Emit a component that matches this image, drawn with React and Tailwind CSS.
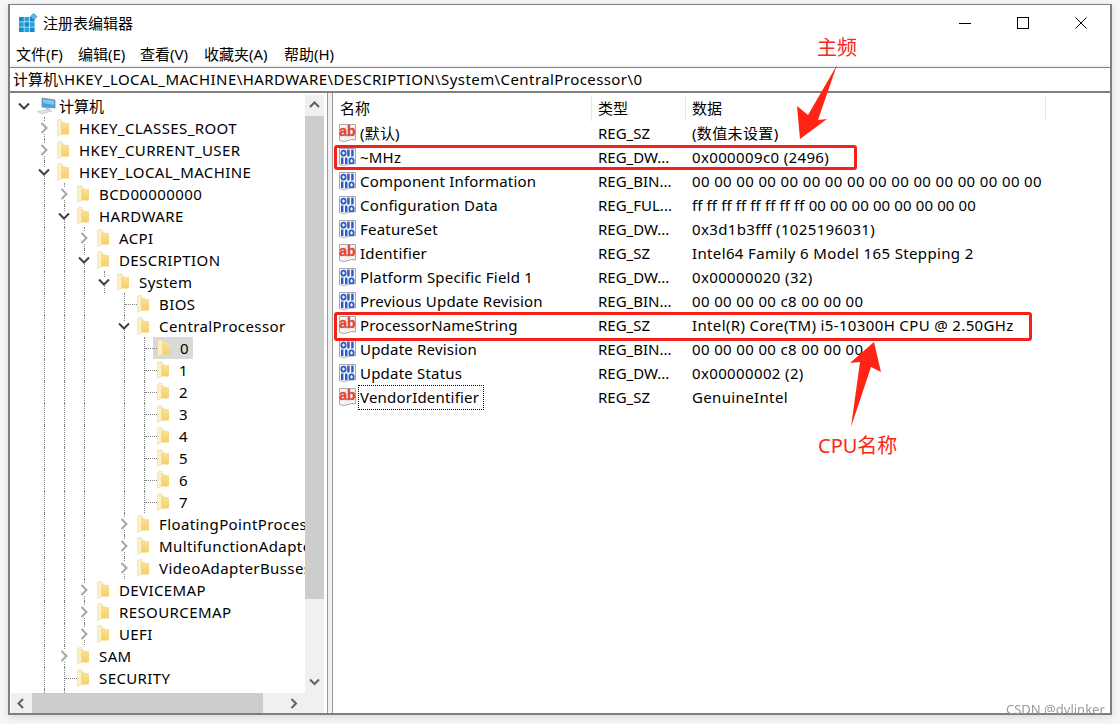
import React from 'react';

const treeRows = [
  { label: '计算机', depth: 0, state: 'open', computer: true },
  { label: 'HKEY_CLASSES_ROOT', depth: 1, state: 'closed' },
  { label: 'HKEY_CURRENT_USER', depth: 1, state: 'closed' },
  { label: 'HKEY_LOCAL_MACHINE', depth: 1, state: 'open' },
  { label: 'BCD00000000', depth: 2, state: 'closed' },
  { label: 'HARDWARE', depth: 2, state: 'open' },
  { label: 'ACPI', depth: 3, state: 'closed' },
  { label: 'DESCRIPTION', depth: 3, state: 'open' },
  { label: 'System', depth: 4, state: 'open' },
  { label: 'BIOS', depth: 5, state: 'leaf' },
  { label: 'CentralProcessor', depth: 5, state: 'open' },
  { label: '0', depth: 6, state: 'leaf', selected: true },
  { label: '1', depth: 6, state: 'leaf' },
  { label: '2', depth: 6, state: 'leaf' },
  { label: '3', depth: 6, state: 'leaf' },
  { label: '4', depth: 6, state: 'leaf' },
  { label: '5', depth: 6, state: 'leaf' },
  { label: '6', depth: 6, state: 'leaf' },
  { label: '7', depth: 6, state: 'leaf' },
  { label: 'FloatingPointProcessor', depth: 5, state: 'closed' },
  { label: 'MultifunctionAdapter', depth: 5, state: 'closed' },
  { label: 'VideoAdapterBusses', depth: 5, state: 'closed' },
  { label: 'DEVICEMAP', depth: 3, state: 'closed' },
  { label: 'RESOURCEMAP', depth: 3, state: 'closed' },
  { label: 'UEFI', depth: 3, state: 'closed' },
  { label: 'SAM', depth: 2, state: 'closed' },
  { label: 'SECURITY', depth: 2, state: 'leaf' },
];

const values = [
  { name: '(默认)', kind: 'sz', type: 'REG_SZ', data: '(数值未设置)' },
  { name: '~MHz', kind: 'bin', type: 'REG_DW...', data: '0x000009c0 (2496)' },
  { name: 'Component Information', kind: 'bin', type: 'REG_BIN...', data: '00 00 00 00 00 00 00 00 00 00 00 00 00 00 00 00' },
  { name: 'Configuration Data', kind: 'bin', type: 'REG_FUL...', data: 'ff ff ff ff ff ff ff ff 00 00 00 00 00 00 00 00', tight: true },
  { name: 'FeatureSet', kind: 'bin', type: 'REG_DW...', data: '0x3d1b3fff (1025196031)' },
  { name: 'Identifier', kind: 'sz', type: 'REG_SZ', data: 'Intel64 Family 6 Model 165 Stepping 2' },
  { name: 'Platform Specific Field 1', kind: 'bin', type: 'REG_DW...', data: '0x00000020 (32)' },
  { name: 'Previous Update Revision', kind: 'bin', type: 'REG_BIN...', data: '00 00 00 00 c8 00 00 00' },
  { name: 'ProcessorNameString', kind: 'sz', type: 'REG_SZ', data: 'Intel(R) Core(TM) i5-10300H CPU @ 2.50GHz' },
  { name: 'Update Revision', kind: 'bin', type: 'REG_BIN...', data: '00 00 00 00 c8 00 00 00' },
  { name: 'Update Status', kind: 'bin', type: 'REG_DW...', data: '0x00000002 (2)' },
  { name: 'VendorIdentifier', kind: 'sz', type: 'REG_SZ', data: 'GenuineIntel', focused: true },
];

const menus = [
  { label: '文件(F)', width: 'w-[62px]' },
  { label: '编辑(E)', width: 'w-[62px]' },
  { label: '查看(V)', width: 'w-[64px]' },
  { label: '收藏夹(A)', width: 'w-[80px]' },
  { label: '帮助(H)', width: 'w-[60px]' },
];

function RegeditIcon() {
  const cells = [];
  for (let r = 0; r < 3; r++) {
    for (let c = 0; c < 3; c++) {
      cells.push(<rect key={`${r}${c}`} x={1 + c * 5.4} y={4 + r * 5.2} width="4.8" height="4.6" fill={(r + c) % 2 ? '#2aa0dc' : '#1689c9'} />);
    }
  }
  return (
    <svg width="20" height="20" viewBox="0 0 20 20" className="shrink-0">
      {cells}
      <path d="M15.5 0.5 L19 3.5 L15.5 7 L12.5 3.5 Z" fill="#5db7e4" stroke="#1c7fb8" strokeWidth="0.6" />
    </svg>
  );
}

function Folder() {
  return (
    <svg width="12" height="18" viewBox="0 0 12 18" className="shrink-0">
      <defs>
        <linearGradient id="folderBody" x1="0" y1="0" x2="0" y2="1">
          <stop offset="0" stopColor="#fbe39b" />
          <stop offset="1" stopColor="#f4cf6c" />
        </linearGradient>
      </defs>
      <path d="M4 2.5 L7.5 2.5 L7.5 4 L12 4 V15.5 H4 Z" fill="url(#folderBody)" />
      <path d="M0 1.5 L4.5 0 V15.5 L0 17.5 Z" fill="#fdf1c4" stroke="#eecf7c" strokeWidth="0.5" />
    </svg>
  );
}

function ComputerIcon() {
  return (
    <svg width="20" height="20" viewBox="0 0 20 20" className="shrink-0">
      <path d="M6 2 L19 4 V12 L6 11 Z" fill="#3fa3de" stroke="#7d8b96" strokeWidth="0.8" />
      <path d="M7 3.2 L18 4.8 V9 L7 7 Z" fill="#7cc7ef" />
      <path d="M10 12 L14 12.4 L14 14 L10 14 Z" fill="#b8c0c6" />
      <path d="M1 15.5 L12 13.5 L16 15 L6 18 Z" fill="#dfe3e6" stroke="#b4bac0" strokeWidth="0.5" />
    </svg>
  );
}

function Chevron({ open }) {
  if (open) {
    return (
      <svg width="12" height="8" viewBox="0 0 12 8" className="shrink-0 bg-white">
        <path d="M1 1.5 L6 6.5 L11 1.5" fill="none" stroke="#404040" strokeWidth="2" />
      </svg>
    );
  }
  return (
    <svg width="8" height="12" viewBox="0 0 8 12" className="shrink-0 bg-white">
      <path d="M1.5 1 L6.5 6 L1.5 11" fill="none" stroke="#a6a6a6" strokeWidth="2" />
    </svg>
  );
}

// dotted guide columns to the left of a row
function guideShown(level, depth) {
  if (level === 0) return false;
  if (level === 4) return false;
  if (level === 5) return depth >= 6;
  return depth > level;
}

function TreeRow({ row }) {
  const cells = [];
  for (let level = 0; level < row.depth; level++) {
    cells.push(
      <div key={level} className="w-5 h-full shrink-0 flex justify-center">
        {guideShown(level, row.depth) && <div className="h-full border-l border-dotted border-[#808080]" />}
      </div>
    );
  }
  return (
    <div className="h-[22px] flex items-center shrink-0 whitespace-nowrap pl-[3px]">
      {cells}
      <div className="relative w-5 h-full shrink-0 flex items-center justify-center">
        {row.depth > 0 && <div className="absolute left-[10px] top-0 h-full border-l border-dotted border-[#808080]" />}
        {row.state === 'leaf' && <div className="absolute left-[11px] right-[-3px] top-[11px] border-t border-dotted border-[#808080]" />}
        {row.state !== 'leaf' && <div className="relative flex"><Chevron open={row.state === 'open'} /></div>}
      </div>
      {row.computer ? (
        <div className="flex items-center h-full">
          <div className="ml-[2px]"><ComputerIcon /></div>
          <span className="ml-[3px]">{row.label}</span>
        </div>
      ) : (
        <div className={`flex items-center h-full pr-1 ${row.selected ? 'bg-[#d9d9d9] -ml-px pl-[5px]' : 'ml-[3px]'}`}>
          <Folder />
          <span className="ml-[10px] tracking-[0.4px]">{row.label}</span>
        </div>
      )}
    </div>
  );
}

function TreeTail() {
  return (
    <div className="h-[22px] flex shrink-0 pl-[3px]">
      <div className="w-5 h-full" />
      <div className="w-5 h-full flex justify-center"><div className="h-full border-l border-dotted border-[#808080]" /></div>
      <div className="w-5 h-full flex justify-center"><div className="h-full border-l border-dotted border-[#808080]" /></div>
    </div>
  );
}

function ValueIcon({ kind }) {
  const page = 'M1.5 1.5 H17.5 V17 Q14 15.5 10 17.5 Q5.5 19.5 1.5 17.5 Z';
  if (kind === 'sz') {
    return (
      <svg width="20" height="20" viewBox="0 0 20 20" className="shrink-0">
        <path d={page} fill="#f7f3f0" stroke="#a8a8a8" />
        <text x="9.5" y="13" textAnchor="middle" fontSize="14" fontWeight="700" fill="#dc4a2c" stroke="#dc4a2c" strokeWidth="0.4" fontFamily="'Liberation Sans', sans-serif">ab</text>
      </svg>
    );
  }
  return (
    <svg width="20" height="20" viewBox="0 0 20 20" className="shrink-0">
      <path d={page} fill="#f7f7f7" stroke="#a8a8a8" />
      <rect x="3.4" y="3.6" width="4.2" height="5" rx="2" fill="none" stroke="#2a58c4" strokeWidth="1.8" />
      <rect x="9.2" y="2.6" width="2.4" height="6.8" fill="#2a58c4" />
      <rect x="13.2" y="2.6" width="2.4" height="6.8" fill="#2a58c4" />
      <rect x="3" y="10.6" width="2.4" height="6.4" fill="#2a58c4" />
      <rect x="7" y="10.6" width="2.4" height="6.4" fill="#2a58c4" />
      <rect x="11.4" y="11.4" width="4.2" height="5" rx="2" fill="none" stroke="#2a58c4" strokeWidth="1.8" />
    </svg>
  );
}

function ValueRow({ item }) {
  return (
    <div className="h-6 flex items-center whitespace-nowrap">
      <div className="w-[259px] shrink-0 flex items-center pl-[5px]">
        <ValueIcon kind={item.kind} />
        <span className={`pl-px border flex items-center h-[25px] tracking-[0.2px] ${item.focused ? 'pr-1 border-dotted border-black' : 'pr-px border-transparent'}`}>{item.name}</span>
      </div>
      <div className="w-[94px] shrink-0 pl-[6px]">{item.type}</div>
      <div className={`pl-[6px] ${item.tight ? 'tracking-[0.12px]' : 'tracking-[0.36px]'}`}>{item.data}</div>
    </div>
  );
}

function Arrow({ dir }) {
  const paths = {
    up: 'M2 8 L6.5 3.5 L11 8',
    down: 'M2 3.5 L6.5 8 L11 3.5',
    left: 'M8 2 L3.5 6.5 L8 11',
    right: 'M4.5 2 L9 6.5 L4.5 11',
  };
  return (
    <svg width="13" height="13" viewBox="0 0 13 13">
      <path d={paths[dir]} fill="none" stroke="#606060" strokeWidth="2" />
    </svg>
  );
}

export default function App() {
  return (
    <div className="relative w-[1120px] h-[724px] overflow-hidden bg-[#f6f6f6] pt-1 pl-2 text-[15px] leading-none text-black font-['Noto_Sans','Noto_Sans_CJK_SC',sans-serif]">
      <div className="w-[1104px] h-[711px] flex flex-col bg-white border-x-2 border-b-2 border-t border-[#7e7e86] shadow-[0_2px_8px_rgba(0,0,0,0.12)]">
        <div className="h-9 shrink-0 flex items-center">
          <div className="pl-2"><RegeditIcon /></div>
          <span className="ml-[5px]">注册表编辑器</span>
          <div className="ml-auto flex h-full">
            <div className="w-[58px] flex items-center justify-center">
              <div className="w-3 border-t border-black" />
            </div>
            <div className="w-[58px] flex items-center justify-center">
              <div className="w-3 h-3 border border-black" />
            </div>
            <div className="w-[58px] flex items-center justify-center">
              <svg width="12" height="12" viewBox="0 0 12 12">
                <path d="M0.5 0.5 L11.5 11.5 M11.5 0.5 L0.5 11.5" stroke="black" strokeWidth="1" fill="none" />
              </svg>
            </div>
          </div>
        </div>

        <div className="h-[26px] shrink-0 flex items-center pt-[2px] pl-[6px] border-b-2 border-[#f4f4f4]">
          {menus.map((m) => (
            <div key={m.label} className={`${m.width} whitespace-nowrap`}>{m.label}</div>
          ))}
        </div>

        <div className="h-[26px] shrink-0 flex items-center pl-[3px] border-t border-b-2 border-[#808080] whitespace-nowrap">
          计算机<span className="tracking-[0.42px]">\HKEY_LOCAL_MACHINE\HARDWARE\DESCRIPTION\System\CentralProcessor\0</span>
        </div>

        <div className="flex-1 flex min-h-0">
          <div className="w-[317px] shrink-0 flex flex-col pl-px pr-[3px]">
            <div className="flex-1 flex min-h-0">
              <div className="flex-1 min-w-0 overflow-hidden pt-[2px] flex flex-col">
                {treeRows.map((row) => (
                  <TreeRow key={row.label} row={row} />
                ))}
                <TreeTail />
              </div>
              <div className="w-[19px] shrink-0 mt-[2px] bg-[#f0f0f0] flex flex-col">
                <div className="h-[21px] flex items-center justify-center"><Arrow dir="up" /></div>
                <div className="h-[483px] bg-[#cdcdcd]" />
                <div className="mt-auto h-[21px] flex items-center justify-center"><Arrow dir="down" /></div>
              </div>
            </div>
            <div className="h-5 shrink-0 bg-[#f0f0f0] flex pr-5">
              <div className="w-[21px] flex items-center justify-center"><Arrow dir="left" /></div>
              <div className="w-[231px] bg-[#cdcdcd]" />
              <div className="ml-auto w-[21px] flex items-center justify-center"><Arrow dir="right" /></div>
            </div>
          </div>

          <div className="w-[6px] shrink-0 bg-[#f0f0f0] border-x border-[#9a9a9a]" />

          <div className="flex-1 min-w-0 flex flex-col overflow-hidden">
            <div className="h-7 shrink-0 flex items-center pt-[2px]">
              <div className="w-[259px] h-full pl-[7px] flex items-center border-r border-[#e5e5e5]">名称</div>
              <div className="w-[94px] h-full pl-[6px] flex items-center border-r border-[#e5e5e5]">类型</div>
              <div className="w-[360px] h-full pl-[6px] flex items-center border-r border-[#e5e5e5]">数据</div>
            </div>
            {values.map((item) => (
              <ValueRow key={item.name} item={item} />
            ))}
          </div>
        </div>
      </div>

      {/* red annotations drawn on top of the screenshot */}
      <div className="absolute left-[334px] top-[145px] w-[523px] h-[25px] border-[3px] border-[#f5201a] rounded-[3px]" />
      <div className="absolute left-[334px] top-[312px] w-[698px] h-[29px] border-[3px] border-[#f5201a] rounded-[3px]" />
      <svg width="1120" height="724" viewBox="0 0 1120 724" className="absolute left-0 top-0 pointer-events-none">
        <polygon points="837,65 818,120 827,119 800,139 797,106 808,115" fill="#ff2415" />
        <polygon points="874,342 881,372 871,367 851,427 860,362 850,363" fill="#ff2415" />
      </svg>
      <div className="absolute left-[817px] top-[38px] text-[20px] text-[#ff2415]">主频</div>
      <div className="absolute left-[818px] top-[436px] text-[20px] text-[#ff2415]">CPU名称</div>
      <div className="absolute left-[1006px] top-[702px] h-3 overflow-hidden text-[13px] leading-[15px] text-[#9a9a9a] blur-[0.4px]">CSDN @dvlinker</div>
    </div>
  );
}
